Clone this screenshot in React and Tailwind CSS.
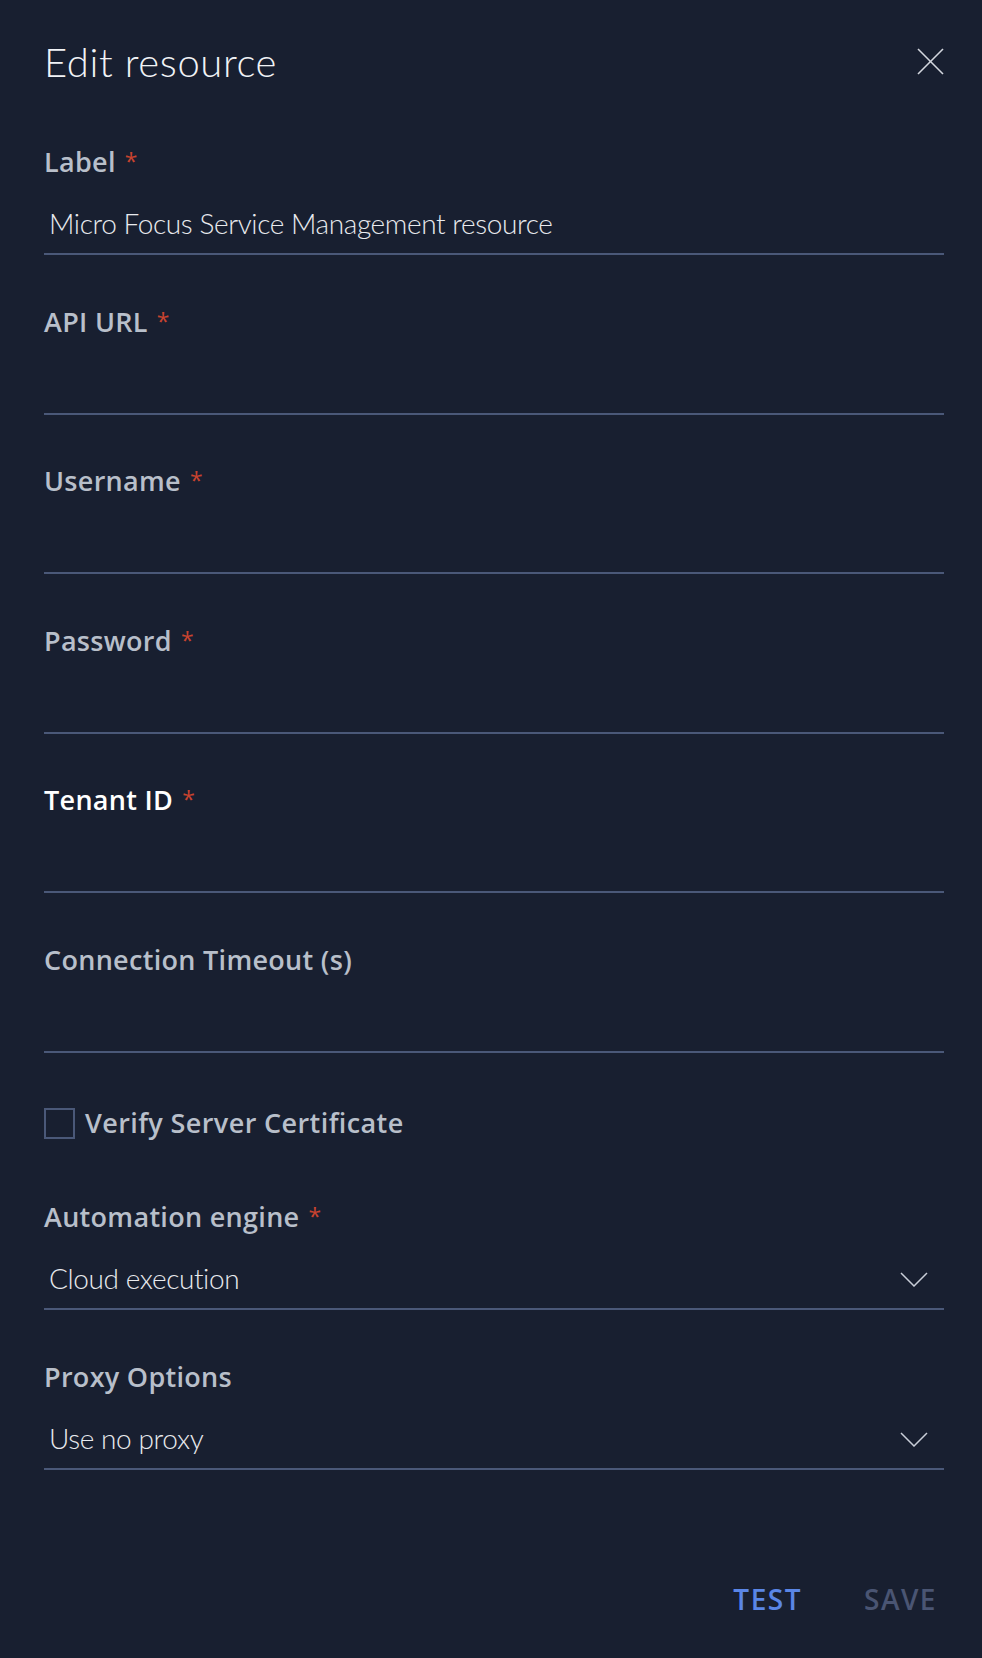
import React from 'react';

const FIELDS = [
  { label: 'Label', required: true, value: 'Micro Focus Service Management resource' },
  { label: 'API URL', required: true },
  { label: 'Username', required: true },
  { label: 'Password', required: true },
  { label: 'Tenant ID', required: true, active: true },
  { label: 'Connection Timeout (s)' },
];

const SELECTS = [
  { label: 'Automation engine', required: true, value: 'Cloud execution' },
  { label: 'Proxy Options', value: 'Use no proxy' },
];

const labelFont = { fontFamily: '"Open Sans", Lato, sans-serif' };

function Chevron() {
  return (
    <svg width="28" height="15" viewBox="0 0 28 15" fill="none" className="text-[#c9ced8]">
      <polyline points="1,1 14,14 27,1" stroke="currentColor" strokeWidth="1.5" />
    </svg>
  );
}

function CloseIcon() {
  return (
    <svg width="27" height="27" viewBox="0 0 27 27" fill="none" className="text-[#d3d7de]">
      <line x1="1" y1="1" x2="26" y2="26" stroke="currentColor" strokeWidth="1.6" />
      <line x1="26" y1="1" x2="1" y2="26" stroke="currentColor" strokeWidth="1.6" />
    </svg>
  );
}

function FieldLabel({ label, required, active }) {
  return (
    <label
      className={`block h-[34px] text-[27px] leading-[34px] font-semibold tracking-[0.3px] ${
        active ? 'text-white' : 'text-[#b8bfca]'
      }`}
      style={labelFont}
    >
      {label}
      {required && (
        <span className="ml-[9px] text-[23px] font-normal leading-none align-top relative top-[5px] text-[#c8432f]">
          *
        </span>
      )}
    </label>
  );
}

function Field({ label, required, value, active, select }) {
  return (
    <div className="mb-[49.5px]">
      <FieldLabel label={label} required={required} active={active} />
      <div className="h-[76px] border-b-2 border-[#4a5878] flex items-end justify-between pb-[13px] pl-[5px] pr-[16px]">
        <span className="text-[28px] leading-[34px] font-light tracking-[-0.4px] text-[#e8eaee]">{value}</span>
        {select && (
          <span className="mb-[8px]">
            <Chevron />
          </span>
        )}
      </div>
    </div>
  );
}

export default function App() {
  return (
    <div
      className="min-h-[1658px] bg-[#181f30] pl-[44px] pr-[38px] pt-[38px]"
      style={{ fontFamily: 'Lato, "Open Sans", sans-serif' }}
    >
      {/* Header */}
      <div className="h-[48px] flex items-center justify-between mb-[59px]">
        <h1 className="text-[40px] leading-[48px] font-light tracking-[0.6px] text-[#f1f3f6]">Edit resource</h1>
        <button className="mt-[-2px]">
          <CloseIcon />
        </button>
      </div>

      {FIELDS.map((f) => (
        <Field key={f.label} {...f} />
      ))}

      {/* Checkbox */}
      <div className="flex items-center gap-[10px] pt-[4px] mb-[60px]">
        <span className="w-[31px] h-[31px] border-2 border-[#4a5878]" />
        <span
          className="text-[27px] leading-[34px] font-semibold tracking-[0.4px] text-[#b8bfca]"
          style={labelFont}
        >
          Verify Server Certificate
        </span>
      </div>

      {SELECTS.map((f) => (
        <Field key={f.label} {...f} select />
      ))}

      {/* Actions */}
      <div className="flex justify-end gap-[62px] pr-[7px] mt-[112px]" style={labelFont}>
        <button className="text-[28px] leading-[34px] font-semibold tracking-[1.5px] text-[#5a86e6]">TEST</button>
        <button className="text-[28px] leading-[34px] font-semibold tracking-[1.5px] text-[#4a5573]">SAVE</button>
      </div>
    </div>
  );
}
